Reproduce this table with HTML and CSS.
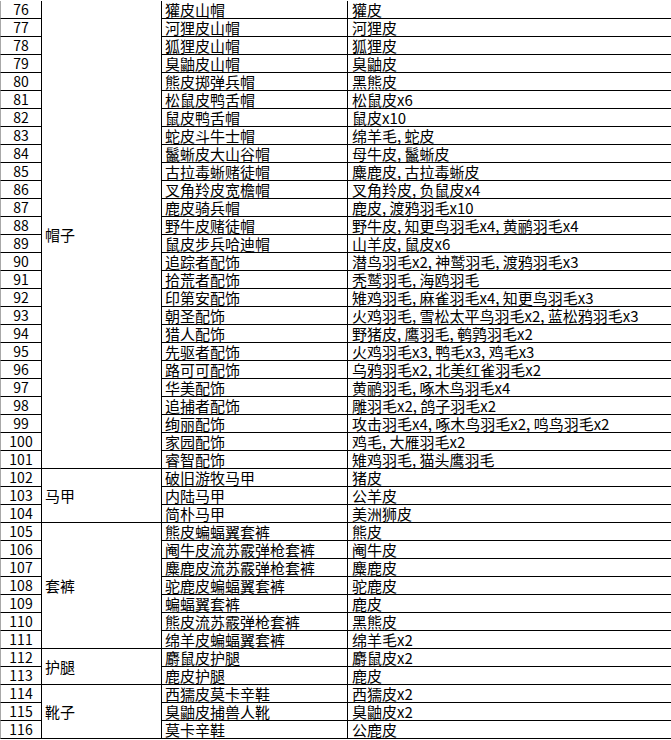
FILE: index.html
```html
<!DOCTYPE html>
<html lang="zh-CN">
<head>
<meta charset="utf-8">
<title>服装材料表</title>
<link rel="stylesheet" href="styles.css">
</head>
<body>
<div class="sheet">
<table class="grid">
<colgroup><col class="c-num"><col class="c-cat"><col class="c-item"><col class="c-mat"></colgroup>
<tbody>
<tr><td class="num">76</td><td class="cat" rowspan="26">帽子</td><td class="item">獾皮山帽</td><td class="mat">獾皮</td></tr>
<tr><td class="num">77</td><td class="item">河狸皮山帽</td><td class="mat">河狸皮</td></tr>
<tr><td class="num">78</td><td class="item">狐狸皮山帽</td><td class="mat">狐狸皮</td></tr>
<tr><td class="num">79</td><td class="item">臭鼬皮山帽</td><td class="mat">臭鼬皮</td></tr>
<tr><td class="num">80</td><td class="item">熊皮掷弹兵帽</td><td class="mat">黑熊皮</td></tr>
<tr><td class="num">81</td><td class="item">松鼠皮鸭舌帽</td><td class="mat">松鼠皮x6</td></tr>
<tr><td class="num">82</td><td class="item">鼠皮鸭舌帽</td><td class="mat">鼠皮x10</td></tr>
<tr><td class="num">83</td><td class="item">蛇皮斗牛士帽</td><td class="mat">绵羊毛, 蛇皮</td></tr>
<tr><td class="num">84</td><td class="item">鬣蜥皮大山谷帽</td><td class="mat">母牛皮, 鬣蜥皮</td></tr>
<tr><td class="num">85</td><td class="item">古拉毒蜥赌徒帽</td><td class="mat">麋鹿皮, 古拉毒蜥皮</td></tr>
<tr><td class="num">86</td><td class="item">叉角羚皮宽檐帽</td><td class="mat">叉角羚皮, 负鼠皮x4</td></tr>
<tr><td class="num">87</td><td class="item">鹿皮骑兵帽</td><td class="mat">鹿皮, 渡鸦羽毛x10</td></tr>
<tr><td class="num">88</td><td class="item">野牛皮赌徒帽</td><td class="mat">野牛皮, 知更鸟羽毛x4, 黄鹂羽毛x4</td></tr>
<tr><td class="num">89</td><td class="item">鼠皮步兵哈迪帽</td><td class="mat">山羊皮, 鼠皮x6</td></tr>
<tr><td class="num">90</td><td class="item">追踪者配饰</td><td class="mat">潜鸟羽毛x2, 神鹫羽毛, 渡鸦羽毛x3</td></tr>
<tr><td class="num">91</td><td class="item">拾荒者配饰</td><td class="mat">秃鹫羽毛, 海鸥羽毛</td></tr>
<tr><td class="num">92</td><td class="item">印第安配饰</td><td class="mat">雉鸡羽毛, 麻雀羽毛x4, 知更鸟羽毛x3</td></tr>
<tr><td class="num">93</td><td class="item">朝圣配饰</td><td class="mat">火鸡羽毛, 雪松太平鸟羽毛x2, 蓝松鸦羽毛x3</td></tr>
<tr><td class="num">94</td><td class="item">猎人配饰</td><td class="mat">野猪皮, 鹰羽毛, 鹌鹑羽毛x2</td></tr>
<tr><td class="num">95</td><td class="item">先驱者配饰</td><td class="mat">火鸡羽毛x3, 鸭毛x3, 鸡毛x3</td></tr>
<tr><td class="num">96</td><td class="item">路可可配饰</td><td class="mat">乌鸦羽毛x2, 北美红雀羽毛x2</td></tr>
<tr><td class="num">97</td><td class="item">华美配饰</td><td class="mat">黄鹂羽毛, 啄木鸟羽毛x4</td></tr>
<tr><td class="num">98</td><td class="item">追捕者配饰</td><td class="mat">雕羽毛x2, 鸽子羽毛x2</td></tr>
<tr><td class="num">99</td><td class="item">绚丽配饰</td><td class="mat">攻击羽毛x4, 啄木鸟羽毛x2, 鸣鸟羽毛x2</td></tr>
<tr><td class="num">100</td><td class="item">家园配饰</td><td class="mat">鸡毛, 大雁羽毛x2</td></tr>
<tr><td class="num">101</td><td class="item">睿智配饰</td><td class="mat">雉鸡羽毛, 猫头鹰羽毛</td></tr>
<tr><td class="num">102</td><td class="cat" rowspan="3">马甲</td><td class="item">破旧游牧马甲</td><td class="mat">猪皮</td></tr>
<tr><td class="num">103</td><td class="item">内陆马甲</td><td class="mat">公羊皮</td></tr>
<tr><td class="num">104</td><td class="item">简朴马甲</td><td class="mat">美洲狮皮</td></tr>
<tr><td class="num">105</td><td class="cat" rowspan="7">套裤</td><td class="item">熊皮蝙蝠翼套裤</td><td class="mat">熊皮</td></tr>
<tr><td class="num">106</td><td class="item">阉牛皮流苏霰弹枪套裤</td><td class="mat">阉牛皮</td></tr>
<tr><td class="num">107</td><td class="item">麋鹿皮流苏霰弹枪套裤</td><td class="mat">麋鹿皮</td></tr>
<tr><td class="num">108</td><td class="item">驼鹿皮蝙蝠翼套裤</td><td class="mat">驼鹿皮</td></tr>
<tr><td class="num">109</td><td class="item">蝙蝠翼套裤</td><td class="mat">鹿皮</td></tr>
<tr><td class="num">110</td><td class="item">熊皮流苏霰弹枪套裤</td><td class="mat">黑熊皮</td></tr>
<tr><td class="num">111</td><td class="item">绵羊皮蝙蝠翼套裤</td><td class="mat">绵羊毛x2</td></tr>
<tr><td class="num">112</td><td class="cat" rowspan="2">护腿</td><td class="item">麝鼠皮护腿</td><td class="mat">麝鼠皮x2</td></tr>
<tr><td class="num">113</td><td class="item">鹿皮护腿</td><td class="mat">鹿皮</td></tr>
<tr><td class="num">114</td><td class="cat" rowspan="3">靴子</td><td class="item">西獳皮莫卡辛鞋</td><td class="mat">西獳皮x2</td></tr>
<tr><td class="num">115</td><td class="item">臭鼬皮捕兽人靴</td><td class="mat">臭鼬皮x2</td></tr>
<tr><td class="num">116</td><td class="item">莫卡辛鞋</td><td class="mat">公鹿皮</td></tr>
</tbody>
</table>
</div>
</body>
</html>
```

FILE: styles.css
```css
html, body {
  margin: 0;
  padding: 0;
  background: #ffffff;
}

.sheet {
  padding-top: 1px;
  width: 671px;
  overflow: hidden;
}

.grid {
  border-collapse: separate;
  border-spacing: 0;
  table-layout: fixed;
  width: 680px;
  font-family: "Noto Sans CJK SC", "Noto Sans", sans-serif;
  font-size: 15px;
  color: #000;
}

.c-num { width: 42px; }
.c-cat { width: 120px; }
.c-item { width: 186px; }
.c-mat { width: 332px; }

.grid td {
  height: 17px;
  line-height: 17px;
  padding: 0;
  border-right: 1px solid #000;
  border-bottom: 1px solid #000;
  white-space: nowrap;
  vertical-align: bottom;
}

.grid td.num {
  border-left: 1px solid #a8a8a8;
  text-align: center;
  font-size: 14px;
}

.grid td.cat {
  vertical-align: middle;
  padding-left: 3px;
}

.grid td.item {
  padding-left: 3px;
}

.grid td.mat {
  padding-left: 4px;
}
```
